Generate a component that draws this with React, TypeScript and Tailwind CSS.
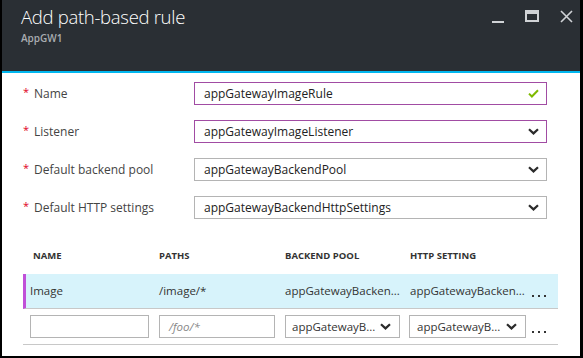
import React from "react";

const font = { fontFamily: '"Open Sans", "Liberation Sans", sans-serif' };

function Chevron() {
  return (
    <svg width="11" height="7" viewBox="0 0 11 7" className="shrink-0">
      <path d="M1 1.2L5.5 5.4L10 1.2" fill="none" stroke="#2b2b2b" strokeWidth="2.2" />
    </svg>
  );
}

function Check() {
  return (
    <svg width="11" height="9" viewBox="0 0 11 9" className="shrink-0">
      <path d="M1 4.6L3.9 7.5L10 1.2" fill="none" stroke="#7fba00" strokeWidth="2" />
    </svg>
  );
}

function Dots() {
  return (
    <div className="flex gap-[4px] mt-[10px] ml-[1px]">
      <div className="w-[2px] h-[2px] bg-[#333]" />
      <div className="w-[2px] h-[2px] bg-[#333]" />
      <div className="w-[2px] h-[2px] bg-[#333]" />
    </div>
  );
}

interface FieldProps {
  label: string;
  value: string;
  active?: boolean;
  check?: boolean;
}

function Field({ label, value, active, check }: FieldProps) {
  return (
    <div className="flex items-center h-[23px]">
      <div className="w-[192px] flex items-center pl-[21px] text-[12px] text-[#444]">
        <span className="text-[#e0001b] text-[11px] w-[11px] -mt-[3px]">*</span>
        <span>{label}</span>
      </div>
      <div
        className={`w-[353px] h-[23px] flex items-center justify-between pl-[9px] pr-[7px] border text-[12px] text-[#222] ${
          active ? "border-[#a14ca3]" : "border-[#b4b4b4]"
        }`}
      >
        <span>{value}</span>
        {check ? <Check /> : <Chevron />}
      </div>
    </div>
  );
}

export default function App() {
  return (
    <div
      className="w-[583px] h-[358px] bg-white border-l-2 border-r-[3px] border-b-2 border-black flex flex-col overflow-hidden"
      style={font}
    >
      {/* header */}
      <div className="h-[71px] bg-[#2a2f34] flex justify-between shrink-0">
        <div className="pl-[19px] pt-[3px]">
          <div className="text-[18.5px] font-light text-white leading-[28px] tracking-[-0.3px]">Add path-based rule</div>
          <div className="text-[10px] font-semibold text-[#a9adb1] leading-[12px] mt-[1px]">AppGW1</div>
        </div>
        <div className="flex items-start gap-[21px] pt-[10px] pr-[7px]">
          <div className="w-[12px] h-[12px] flex items-end">
            <div className="w-[12px] h-[2px] bg-[#d0d3d6] -mb-[1px]" />
          </div>
          <div className="w-[14px] h-[12px] border-2 border-t-[4px] border-[#d0d3d6]" />
          <svg width="13" height="13" viewBox="0 0 13 13">
            <path d="M1 1L12 12M12 1L1 12" stroke="#d0d3d6" strokeWidth="1.6" />
          </svg>
        </div>
      </div>
      <div className="h-[2px] bg-[#00b7ef] shrink-0" />

      {/* form */}
      <div className="flex flex-col gap-[15px] pt-[9px]">
        <Field label="Name" value="appGatewayImageRule" active check />
        <Field label="Listener" value="appGatewayImageListener" active />
        <Field label="Default backend pool" value="appGatewayBackendPool" />
        <Field label="Default HTTP settings" value="appGatewayBackendHttpSettings" />
      </div>

      {/* table */}
      <div className="ml-[21px] w-[535px] mt-[21px]">
        <div className="grid grid-cols-[129px_126px_125px_121px_1fr] pl-[7px] h-[34px] items-start pt-[9px] text-[9.5px] font-bold text-[#333] uppercase">
          <div className="pl-[3px]">Name</div>
          <div>Paths</div>
          <div>Backend pool</div>
          <div>HTTP setting</div>
        </div>
        <div className="grid grid-cols-[129px_126px_125px_121px_1fr] pl-[4px] h-[35px] items-center bg-[#d7f3fb] border-l-[3px] border-[#c050d8] border-b border-b-[#c8c8c8] text-[11.5px] text-[#333]">
          <div>Image</div>
          <div>/image/*</div>
          <div className="whitespace-nowrap">appGatewayBacken...</div>
          <div className="whitespace-nowrap">appGatewayBacken...</div>
          <Dots />
        </div>
        <div className="grid grid-cols-[129px_126px_125px_121px_1fr] pl-[7px] h-[36px] items-center border-b border-[#c8c8c8] text-[11.5px] text-[#333]">
          <div className="w-[119px] h-[23px] border border-[#b4b4b4]" />
          <div className="w-[116px] h-[23px] border border-[#b4b4b4] flex items-center pl-[9px] italic text-[#888]">/foo/*</div>
          <div className="w-[115px] h-[23px] border border-[#b4b4b4] flex items-center justify-between pl-[6px] pr-[8px]">
            <span className="whitespace-nowrap">appGatewayB...</span>
            <Chevron />
          </div>
          <div className="-ml-[1px] w-[117px] h-[23px] border border-[#b4b4b4] flex items-center justify-between pl-[7px] pr-[8px]">
            <span className="whitespace-nowrap">appGatewayB...</span>
            <Chevron />
          </div>
          <Dots />
        </div>
      </div>
    </div>
  );
}
